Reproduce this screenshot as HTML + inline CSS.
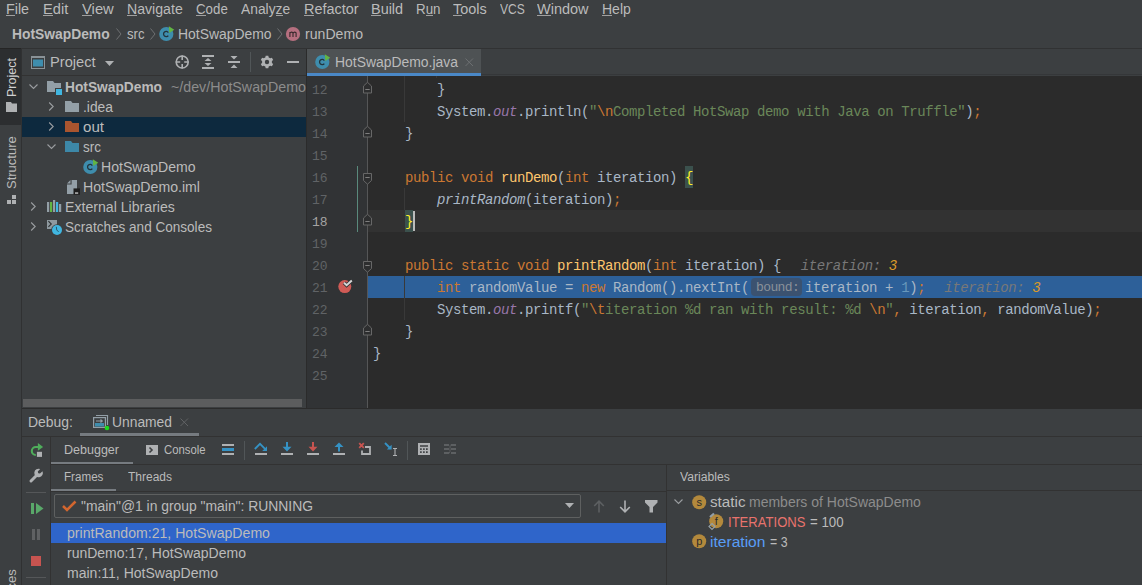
<!DOCTYPE html>
<html><head><meta charset="utf-8">
<style>
*{margin:0;padding:0;box-sizing:border-box}
html,body{width:1142px;height:585px;overflow:hidden;background:#3C3F41}
body{position:relative;font-family:"Liberation Sans",sans-serif;font-size:14px;color:#BBBBBB}
.a{position:absolute;white-space:pre}
svg.a{overflow:visible}
.ln{position:absolute;left:307px;width:61px;height:22px;line-height:22px;font-family:"Liberation Mono",monospace;font-size:13px;color:#606366;padding-left:5px}
.cl{position:absolute;left:373px;height:22px;line-height:22px;font-family:"Liberation Mono",monospace;font-size:14px;letter-spacing:-0.4px;color:#A9B7C6;white-space:pre}
.kw{color:#CC7832}
.str{color:#6A8759}
.num{color:#6897BB}
.fn{color:#FFC66D}
.sf{color:#9876AA;font-style:italic}
.it{font-style:italic}
.esc{color:#CC7832}
.hint{color:#787878;font-style:italic}
.hv{color:#DB9A2A;font-style:italic}
.bm{color:#FFEF28}
.bound{display:inline-block;width:56px}
</style></head><body>
<span class="a" style="left:6px;top:1.62px;font-size:14.63px;line-height:14.63px;color:#BBBBBB;transform:scaleX(0.980);transform-origin:0 0;">File</span>
<div class="a" style="left:6px;top:15px;width:9px;height:1px;background:#A0A0A0;"></div>
<span class="a" style="left:43px;top:1.62px;font-size:14.63px;line-height:14.63px;color:#BBBBBB;">Edit</span>
<div class="a" style="left:43px;top:15px;width:10px;height:1px;background:#A0A0A0;"></div>
<span class="a" style="left:82px;top:1.62px;font-size:14.63px;line-height:14.63px;color:#BBBBBB;transform:scaleX(1.011);transform-origin:0 0;">View</span>
<div class="a" style="left:82px;top:15px;width:10px;height:1px;background:#A0A0A0;"></div>
<span class="a" style="left:127px;top:1.62px;font-size:14.63px;line-height:14.63px;color:#BBBBBB;transform:scaleX(0.966);transform-origin:0 0;">Navigate</span>
<div class="a" style="left:127px;top:15px;width:10px;height:1px;background:#A0A0A0;"></div>
<span class="a" style="left:196px;top:1.62px;font-size:14.63px;line-height:14.63px;color:#BBBBBB;transform:scaleX(0.909);transform-origin:0 0;">Code</span>
<div class="a" style="left:196px;top:15px;width:10px;height:1px;background:#A0A0A0;"></div>
<span class="a" style="left:241px;top:1.62px;font-size:14.63px;line-height:14.63px;color:#BBBBBB;transform:scaleX(0.945);transform-origin:0 0;">Analyze</span>
<div class="a" style="left:276px;top:15px;width:7px;height:1px;background:#A0A0A0;"></div>
<span class="a" style="left:304px;top:1.62px;font-size:14.63px;line-height:14.63px;color:#BBBBBB;transform:scaleX(0.986);transform-origin:0 0;">Refactor</span>
<div class="a" style="left:304px;top:15px;width:10px;height:1px;background:#A0A0A0;"></div>
<span class="a" style="left:371px;top:1.62px;font-size:14.63px;line-height:14.63px;color:#BBBBBB;transform:scaleX(0.987);transform-origin:0 0;">Build</span>
<div class="a" style="left:371px;top:15px;width:10px;height:1px;background:#A0A0A0;"></div>
<span class="a" style="left:416px;top:1.62px;font-size:14.63px;line-height:14.63px;color:#BBBBBB;transform:scaleX(0.913);transform-origin:0 0;">Run</span>
<div class="a" style="left:426px;top:15px;width:7px;height:1px;background:#A0A0A0;"></div>
<span class="a" style="left:453px;top:1.62px;font-size:14.63px;line-height:14.63px;color:#BBBBBB;transform:scaleX(0.987);transform-origin:0 0;">Tools</span>
<div class="a" style="left:453px;top:15px;width:9px;height:1px;background:#A0A0A0;"></div>
<span class="a" style="left:500px;top:1.62px;font-size:14.63px;line-height:14.63px;color:#BBBBBB;transform:scaleX(0.824);transform-origin:0 0;">VCS</span>
<span class="a" style="left:537px;top:1.62px;font-size:14.63px;line-height:14.63px;color:#BBBBBB;transform:scaleX(0.990);transform-origin:0 0;">Window</span>
<div class="a" style="left:537px;top:15px;width:14px;height:1px;background:#A0A0A0;"></div>
<span class="a" style="left:602px;top:1.62px;font-size:14.63px;line-height:14.63px;color:#BBBBBB;transform:scaleX(0.957);transform-origin:0 0;">Help</span>
<div class="a" style="left:602px;top:15px;width:10px;height:1px;background:#A0A0A0;"></div>
<span class="a" style="left:12px;top:26.62px;font-size:14.63px;line-height:14.63px;color:#BBBBBB;font-weight:bold;transform:scaleX(0.946);transform-origin:0 0;">HotSwapDemo</span>
<svg class="a" style="left:116px;top:28px" width="6" height="12" viewBox="0 0 6 12"><path d="M0.5 0.5 L5 6.0 L0.5 11.5" fill="none" stroke="#6E7072" stroke-width="1"/></svg>
<span class="a" style="left:127px;top:26.62px;font-size:14.63px;line-height:14.63px;color:#BBBBBB;transform:scaleX(0.897);transform-origin:0 0;">src</span>
<svg class="a" style="left:150px;top:28px" width="6" height="12" viewBox="0 0 6 12"><path d="M0.5 0.5 L5 6.0 L0.5 11.5" fill="none" stroke="#6E7072" stroke-width="1"/></svg>
<svg class="a" style="left:159px;top:26px" width="16" height="16" viewBox="0 0 16 16"><circle cx="7.3" cy="8" r="7.1" fill="#3E8DAD"/><path d="M9.3 6.5 A2.6 2.6 0 1 0 9.3 9.5" fill="none" stroke="#23343C" stroke-width="1.3"/><path d="M9.8 0.3 L15.3 3.8 L10.3 7 Z" fill="#62B543"/></svg>
<span class="a" style="left:178px;top:26.62px;font-size:14.63px;line-height:14.63px;color:#BBBBBB;transform:scaleX(0.951);transform-origin:0 0;">HotSwapDemo</span>
<svg class="a" style="left:277px;top:28px" width="6" height="12" viewBox="0 0 6 12"><path d="M0.5 0.5 L5 6.0 L0.5 11.5" fill="none" stroke="#6E7072" stroke-width="1"/></svg>
<svg class="a" style="left:285px;top:26px" width="16" height="16" viewBox="0 0 16 16"><circle cx="8" cy="8" r="7.1" fill="#B56F7F"/><path d="M4.9 11 V6 M4.9 7.2 Q6.4 5.2 8 6.8 V11 M8 7.2 Q9.6 5.2 11.1 6.8 V11" fill="none" stroke="#3A2A2E" stroke-width="1.15"/></svg>
<span class="a" style="left:305px;top:26.62px;font-size:14.63px;line-height:14.63px;color:#BBBBBB;transform:scaleX(0.964);transform-origin:0 0;">runDemo</span>
<div class="a" style="left:0px;top:48px;width:1142px;height:1px;background:#313233;"></div>
<div class="a" style="left:0px;top:48px;width:21px;height:1px;background:#252525;"></div>
<div class="a" style="left:0px;top:49px;width:21px;height:536px;background:#3C3F41;"></div>
<div class="a" style="left:0px;top:49px;width:21px;height:76px;background:#2C2E30;"></div>
<div class="a" style="left:21px;top:49px;width:1px;height:536px;background:#303132;"></div>
<span class="a" style="left:5px;top:97px;font-size:13px;line-height:13px;color:#D0D0D0;transform:rotate(-90deg) scaleX(0.963);transform-origin:0 0">Project</span>
<svg class="a" style="left:6px;top:102px" width="12" height="10" viewBox="0 0 12 10"><path d="M0 0 H5 L6 1.5 H11 V10 H0 Z" fill="#AFB1B3"/></svg>
<span class="a" style="left:5px;top:189px;font-size:13px;line-height:13px;color:#BBBBBB;transform:rotate(-90deg);transform-origin:0 0">Structure</span>
<svg class="a" style="left:7px;top:195px" width="10" height="10" viewBox="0 0 10 10"><rect x="5" y="0" width="4" height="4" fill="#AFB1B3"/><rect x="0" y="5" width="4" height="4" fill="#AFB1B3"/><rect x="5" y="5" width="4" height="4" fill="#AFB1B3"/></svg>
<span class="a" style="left:5px;top:619px;font-size:13px;line-height:13px;color:#BBBBBB;transform:rotate(-90deg);transform-origin:0 0">Services</span>
<div class="a" style="left:22px;top:75px;width:284px;height:1px;background:#323232;"></div>
<svg class="a" style="left:31px;top:56px" width="14" height="13" viewBox="0 0 14 13"><rect x="0.5" y="0.5" width="13" height="12" fill="none" stroke="#8A9297" stroke-width="1"/><rect x="0" y="0" width="14" height="2" fill="#8A9297"/><rect x="2" y="3.5" width="10" height="7" fill="#3E8DAD"/></svg>
<span class="a" style="left:50px;top:54.62px;font-size:14.63px;line-height:14.63px;color:#BBBBBB;">Project</span>
<svg class="a" style="left:105px;top:61px" width="10" height="6" viewBox="0 0 10 6"><path d="M0 0 H9 L4.5 5 Z" fill="#AFB1B3"/></svg>
<svg class="a" style="left:175px;top:55px" width="15" height="15" viewBox="0 0 15 15"><circle cx="7.2" cy="7" r="6" fill="none" stroke="#AFB1B3" stroke-width="1.6"/><path d="M7.2 0.5 V5 M7.2 9 V13.5 M0.8 7 H5.2 M9.2 7 H13.6" stroke="#AFB1B3" stroke-width="1.6"/></svg>
<svg class="a" style="left:202px;top:55px" width="13" height="15" viewBox="0 0 13 15"><rect x="0" y="0" width="12" height="2" fill="#AFB1B3"/><rect x="0" y="12" width="12" height="2" fill="#AFB1B3"/><path d="M2.5 6 L6 3 L9.5 6 Z M2.5 8 L6 11 L9.5 8 Z" fill="#AFB1B3"/></svg>
<svg class="a" style="left:228px;top:55px" width="13" height="15" viewBox="0 0 13 15"><rect x="0" y="6" width="12" height="2" fill="#AFB1B3"/><path d="M2.5 1 L6 4.5 L9.5 1 Z M2.5 13 L6 9.5 L9.5 13 Z" fill="#AFB1B3"/></svg>
<div class="a" style="left:250px;top:52px;width:1px;height:20px;background:#515658;"></div>
<svg class="a" style="left:260px;top:55px" width="14" height="14" viewBox="0 0 14 14"><g transform="translate(7,7)"><path d="M-1.3 -6.3 H1.3 L1.7 -4.6 L3.3 -3.7 L4.9 -4.3 L6.2 -2 L4.9 -0.9 V0.9 L6.2 2 L4.9 4.3 L3.3 3.7 L1.7 4.6 L1.3 6.3 H-1.3 L-1.7 4.6 L-3.3 3.7 L-4.9 4.3 L-6.2 2 L-4.9 0.9 V-0.9 L-6.2 -2 L-4.9 -4.3 L-3.3 -3.7 L-1.7 -4.6 Z" fill="#AFB1B3"/><circle r="2.2" fill="#3C3F41"/></g></svg>
<div class="a" style="left:287px;top:61px;width:12px;height:2px;background:#AFB1B3;"></div>
<div class="a" style="left:22px;top:117px;width:284px;height:20px;background:#0D293E;"></div>
<svg class="a" style="left:29px;top:84px" width="10" height="6" viewBox="0 0 10 6"><path d="M0.5 0.5 L4.5 4.5 L8.5 0.5" fill="none" stroke="#9A9DA0" stroke-width="1.1"/></svg>
<svg class="a" style="left:47px;top:81px" width="16" height="15" viewBox="0 0 16 15"><path d="M0 0 H6 L7.5 2 H14 V11 H0 Z" fill="#939FA7"/><rect x="8" y="7" width="8" height="8" fill="#3C3F41"/><rect x="9" y="8" width="6" height="6" fill="#40B6E0"/></svg>
<span class="a" style="left:65px;top:79.62px;font-size:14.63px;line-height:14.63px;color:#BBBBBB;font-weight:bold;transform:scaleX(0.940);transform-origin:0 0;">HotSwapDemo</span>
<span class="a" style="left:171px;top:79.62px;font-size:14.63px;line-height:14.63px;color:#8C8C8C;transform:scaleX(0.974);transform-origin:0 0;">~/dev/HotSwapDemo</span>
<svg class="a" style="left:48px;top:102px" width="7" height="10" viewBox="0 0 7 10"><path d="M1.2 0.5 L5.2 4.5 L1.2 8.5" fill="none" stroke="#9A9DA0" stroke-width="1.1"/></svg>
<svg class="a" style="left:65px;top:101px" width="15" height="12" viewBox="0 0 15 12"><path d="M0 0 H6 L7.5 2 H14 V11 H0 Z" fill="#939FA7"/></svg>
<span class="a" style="left:83px;top:99.62px;font-size:14.63px;line-height:14.63px;color:#BBBBBB;transform:scaleX(0.946);transform-origin:0 0;">.idea</span>
<svg class="a" style="left:48px;top:122px" width="7" height="10" viewBox="0 0 7 10"><path d="M1.2 0.5 L5.2 4.5 L1.2 8.5" fill="none" stroke="#9A9DA0" stroke-width="1.1"/></svg>
<svg class="a" style="left:65px;top:121px" width="15" height="12" viewBox="0 0 15 12"><path d="M0 0 H6 L7.5 2 H14 V11 H0 Z" fill="#A9552F"/></svg>
<span class="a" style="left:83px;top:119.62px;font-size:14.63px;line-height:14.63px;color:#BBBBBB;transform:scaleX(1.033);transform-origin:0 0;">out</span>
<svg class="a" style="left:47px;top:144px" width="10" height="6" viewBox="0 0 10 6"><path d="M0.5 0.5 L4.5 4.5 L8.5 0.5" fill="none" stroke="#9A9DA0" stroke-width="1.1"/></svg>
<svg class="a" style="left:65px;top:141px" width="15" height="12" viewBox="0 0 15 12"><path d="M0 0 H6 L7.5 2 H14 V11 H0 Z" fill="#3D88A8"/></svg>
<span class="a" style="left:83px;top:139.62px;font-size:14.63px;line-height:14.63px;color:#BBBBBB;transform:scaleX(0.923);transform-origin:0 0;">src</span>
<svg class="a" style="left:83px;top:159px" width="16" height="16" viewBox="0 0 16 16"><circle cx="7.3" cy="8" r="7.1" fill="#3E8DAD"/><path d="M9.3 6.5 A2.6 2.6 0 1 0 9.3 9.5" fill="none" stroke="#23343C" stroke-width="1.3"/><path d="M9.8 0.3 L15.3 3.8 L10.3 7 Z" fill="#62B543"/></svg>
<span class="a" style="left:101px;top:159.62px;font-size:14.63px;line-height:14.63px;color:#BBBBBB;transform:scaleX(0.962);transform-origin:0 0;">HotSwapDemo</span>
<svg class="a" style="left:67px;top:180px" width="14" height="15" viewBox="0 0 14 15"><path d="M4.6 0 H10 V14 H0 V4.6 H4.6 Z" fill="#939FA7"/><path d="M0 3.5 L3.5 0 V3.5 Z" fill="#939FA7"/><rect x="6.5" y="8.4" width="6.5" height="6.3" fill="#1E1E1E"/><rect x="8" y="12.5" width="3.2" height="1.1" fill="#EEEEEE"/></svg>
<span class="a" style="left:83px;top:179.62px;font-size:14.63px;line-height:14.63px;color:#BBBBBB;transform:scaleX(0.966);transform-origin:0 0;">HotSwapDemo.iml</span>
<svg class="a" style="left:30px;top:202px" width="7" height="10" viewBox="0 0 7 10"><path d="M1.2 0.5 L5.2 4.5 L1.2 8.5" fill="none" stroke="#9A9DA0" stroke-width="1.1"/></svg>
<svg class="a" style="left:47px;top:200px" width="15" height="13" viewBox="0 0 15 13"><rect x="0" y="2" width="2.2" height="10" fill="#939FA7"/><rect x="3" y="2" width="2.2" height="10" fill="#62B543"/><rect x="6" y="0" width="2.2" height="12" fill="#939FA7"/><rect x="9" y="2" width="2.2" height="10" fill="#40B6E0"/><rect x="12" y="4" width="2.2" height="8" fill="#939FA7"/></svg>
<span class="a" style="left:65px;top:199.62px;font-size:14.63px;line-height:14.63px;color:#BBBBBB;transform:scaleX(0.966);transform-origin:0 0;">External Libraries</span>
<svg class="a" style="left:30px;top:222px" width="7" height="10" viewBox="0 0 7 10"><path d="M1.2 0.5 L5.2 4.5 L1.2 8.5" fill="none" stroke="#9A9DA0" stroke-width="1.1"/></svg>
<svg class="a" style="left:46px;top:219px" width="17" height="17" viewBox="0 0 17 17"><rect x="1" y="1" width="10" height="9" fill="#8E999F"/><path d="M2.4 2.2 L5.3 5 L2.4 7.9" fill="none" stroke="#2E3133" stroke-width="1.1"/><circle cx="11" cy="11" r="5.8" fill="#3C3F41"/><circle cx="11" cy="11" r="5" fill="#40B6E0"/><path d="M10.3 7.8 Q10 11.5 12.6 12.9" fill="none" stroke="#2A5568" stroke-width="1"/></svg>
<span class="a" style="left:65px;top:219.62px;font-size:14.63px;line-height:14.63px;color:#BBBBBB;transform:scaleX(0.927);transform-origin:0 0;">Scratches and Consoles</span>
<div class="a" style="left:23px;top:399px;width:279px;height:8px;background:#5C5D5E;"></div>
<div class="a" style="left:306px;top:49px;width:1px;height:359px;background:#2B2B2B;"></div>
<div class="a" style="left:307px;top:49px;width:835px;height:27px;background:#3C3F41;"></div>
<div class="a" style="left:307px;top:74px;width:835px;height:1px;background:#353739;"></div>
<div class="a" style="left:307px;top:49px;width:174px;height:27px;background:#4E5254;"></div>
<div class="a" style="left:307px;top:73px;width:174px;height:3px;background:#4A88C7;"></div>
<svg class="a" style="left:315px;top:54px" width="16" height="16" viewBox="0 0 16 16"><circle cx="7.3" cy="8" r="7.1" fill="#3E8DAD"/><path d="M9.3 6.5 A2.6 2.6 0 1 0 9.3 9.5" fill="none" stroke="#23343C" stroke-width="1.3"/><path d="M9.8 0.3 L15.3 3.8 L10.3 7 Z" fill="#62B543"/></svg>
<span class="a" style="left:335px;top:54.62px;font-size:14.63px;line-height:14.63px;color:#BBBBBB;transform:scaleX(0.951);transform-origin:0 0;">HotSwapDemo.java</span>
<svg class="a" style="left:465px;top:58px" width="9" height="9" viewBox="0 0 9 9"><path d="M0.5 0.5 L8 8 M8 0.5 L0.5 8" stroke="#6C6F71" stroke-width="1"/></svg>
<div class="a" style="left:307px;top:76px;width:835px;height:332px;background:#2B2B2B;"></div>
<div class="a" style="left:307px;top:76px;width:61px;height:332px;background:#313335;"></div>
<!--CODE-->
<div class="a" style="left:368px;top:210px;width:774px;height:22px;background:#323232;"></div>
<div class="a" style="left:368px;top:276px;width:774px;height:22px;background:#2D6099;"></div>
<div class="a" style="left:685px;top:166px;width:8px;height:22px;background:#3B514D;"></div>
<div class="a" style="left:405px;top:210px;width:8px;height:22px;background:#3B514D;"></div>
<div class="a" style="left:413px;top:211px;width:2px;height:20px;background:#BBBBBB;"></div>
<div class="a" style="left:751px;top:278px;width:51px;height:18px;background:#3B5270;border-radius:4px;"></div>
<div class="a" style="left:357px;top:166px;width:1px;height:66px;background:#5A8A7C;"></div>
<div class="a" style="left:367px;top:76px;width:1px;height:332px;background:#555657;"></div>
<div class="a" style="left:404px;top:76px;width:1px;height:46px;background:#393939;"></div>
<div class="a" style="left:436px;top:76px;width:1px;height:2px;background:#393939;"></div>
<div class="a" style="left:404px;top:188px;width:1px;height:22px;background:#393939;"></div>
<div class="a" style="left:404px;top:276px;width:1px;height:44px;background:#393939;"></div>
<svg class="a" style="left:363px;top:82px" width="9" height="12" viewBox="0 0 9 12"><path d="M0.5 11 H8.5 V4 L4.5 0.3 L0.5 4 Z" fill="#2D2E2F" stroke="#676767" stroke-width="1"/><path d="M2.3 7.5 H6.7" stroke="#7E7E7E" stroke-width="1"/></svg>
<svg class="a" style="left:363px;top:126px" width="9" height="12" viewBox="0 0 9 12"><path d="M0.5 11 H8.5 V4 L4.5 0.3 L0.5 4 Z" fill="#2D2E2F" stroke="#676767" stroke-width="1"/><path d="M2.3 7.5 H6.7" stroke="#7E7E7E" stroke-width="1"/></svg>
<svg class="a" style="left:363px;top:173px" width="9" height="12" viewBox="0 0 9 12"><path d="M0.5 0.5 H8.5 V7.5 L4.5 11.2 L0.5 7.5 Z" fill="#2D2E2F" stroke="#676767" stroke-width="1"/><path d="M2.3 4.5 H6.7" stroke="#7E7E7E" stroke-width="1"/></svg>
<svg class="a" style="left:363px;top:214px" width="9" height="12" viewBox="0 0 9 12"><path d="M0.5 11 H8.5 V4 L4.5 0.3 L0.5 4 Z" fill="#2D2E2F" stroke="#676767" stroke-width="1"/><path d="M2.3 7.5 H6.7" stroke="#7E7E7E" stroke-width="1"/></svg>
<svg class="a" style="left:363px;top:261px" width="9" height="12" viewBox="0 0 9 12"><path d="M0.5 0.5 H8.5 V7.5 L4.5 11.2 L0.5 7.5 Z" fill="#2D2E2F" stroke="#676767" stroke-width="1"/><path d="M2.3 4.5 H6.7" stroke="#7E7E7E" stroke-width="1"/></svg>
<svg class="a" style="left:363px;top:324px" width="9" height="12" viewBox="0 0 9 12"><path d="M0.5 11 H8.5 V4 L4.5 0.3 L0.5 4 Z" fill="#2D2E2F" stroke="#676767" stroke-width="1"/><path d="M2.3 7.5 H6.7" stroke="#7E7E7E" stroke-width="1"/></svg>
<svg class="a" style="left:336px;top:278px" width="18" height="17" viewBox="0 0 18 17"><circle cx="8.8" cy="8.6" r="6.5" fill="#D05B56"/><path d="M8 4.8 L10.6 7.2 L15.8 2.5" fill="none" stroke="#313335" stroke-width="3.6"/><path d="M8 4.8 L10.6 7.2 L15.8 2.5" fill="none" stroke="#D6D6D6" stroke-width="2"/></svg>
<div class="ln" style="top:80px">12</div>
<div class="ln" style="top:102px">13</div>
<div class="ln" style="top:124px">14</div>
<div class="ln" style="top:146px">15</div>
<div class="ln" style="top:168px">16</div>
<div class="ln" style="top:190px">17</div>
<div class="ln" style="top:212px;color:#A4A3A3">18</div>
<div class="ln" style="top:234px">19</div>
<div class="ln" style="top:256px">20</div>
<div class="ln" style="top:278px">21</div>
<div class="ln" style="top:300px">22</div>
<div class="ln" style="top:322px">23</div>
<div class="ln" style="top:344px">24</div>
<div class="ln" style="top:366px">25</div>
<div class="cl" style="top:79px">        }</div>
<div class="cl" style="top:101px">        System.<span class="sf">out</span>.println(<span class="str">"<span class="esc">\n</span>Completed HotSwap demo with Java on Truffle"</span>)<span class="kw">;</span></div>
<div class="cl" style="top:123px">    }</div>
<div class="cl" style="top:167px">    <span class="kw">public void </span><span class="fn">runDemo</span>(<span class="kw">int </span>iteration) <span class="bm">{</span></div>
<div class="cl" style="top:189px">        <span class="it">printRandom</span>(iteration)<span class="kw">;</span></div>
<div class="cl" style="top:211px">    <span class="bm">}</span></div>
<div class="cl" style="top:255px">    <span class="kw">public static void </span><span class="fn">printRandom</span>(<span class="kw">int </span>iteration) {<span class="hint" style="margin-left:19.5px">iteration: </span><span class="hv">3</span></div>
<div class="cl" style="top:277px">        <span class="kw">int </span>randomValue = <span class="kw">new </span>Random().nextInt(<span class="bound"></span>iteration + <span class="num">1</span>)<span class="kw">;</span><span class="hint" style="margin-left:19px">iteration: </span><span class="hv">3</span></div>
<div class="cl" style="top:299px">        System.<span class="sf">out</span>.printf(<span class="str">"<span class="esc">\t</span>iteration %d ran with result: %d <span class="esc">\n</span>"</span><span class="kw">, </span>iteration<span class="kw">, </span>randomValue)<span class="kw">;</span></div>
<div class="cl" style="top:321px">    }</div>
<div class="cl" style="top:343px">}</div>
<span class="a" style="left:756px;top:281px;font-family:'Liberation Mono',monospace;font-size:13px;line-height:13px;letter-spacing:-0.6px;color:#8A9199">bound:</span>
<div class="a" style="left:22px;top:408px;width:1120px;height:1px;background:#2B2B2B;"></div>
<span class="a" style="left:28px;top:414.62px;font-size:14.63px;line-height:14.63px;color:#BBBBBB;transform:scaleX(0.954);transform-origin:0 0;">Debug:</span>
<svg class="a" style="left:93px;top:414px" width="17" height="17" viewBox="0 0 17 17"><path d="M3 1.5 H14.5 V11" fill="none" stroke="#939FA7" stroke-width="1.2"/><rect x="0.6" y="3.6" width="11.8" height="9.8" fill="none" stroke="#939FA7" stroke-width="1.2"/><rect x="2" y="9" width="9" height="3.5" fill="#3E8DAD"/><path d="M3 7 H9 M7.5 5.5 L9.3 7 L7.5 8.5" fill="none" stroke="#939FA7" stroke-width="1.1"/><circle cx="14" cy="14" r="2.3" fill="#1ED81E"/></svg>
<span class="a" style="left:112px;top:414.62px;font-size:14.63px;line-height:14.63px;color:#BBBBBB;transform:scaleX(0.946);transform-origin:0 0;">Unnamed</span>
<svg class="a" style="left:180px;top:418px" width="9" height="9" viewBox="0 0 9 9"><path d="M0.5 0.5 L8 8 M8 0.5 L0.5 8" stroke="#606264" stroke-width="1"/></svg>
<div class="a" style="left:80px;top:433px;width:119px;height:3px;background:#767B80;"></div>
<div class="a" style="left:22px;top:436px;width:1120px;height:1px;background:#323232;"></div>
<div class="a" style="left:50px;top:437px;width:1px;height:148px;background:#323232;"></div>
<svg class="a" style="left:26px;top:440px" width="20" height="20" viewBox="0 0 20 20"><path d="M9.8 15 A4 4 0 0 1 9.8 7 H12.5" fill="none" stroke="#4FAD5B" stroke-width="2.1"/><path d="M11.9 2.9 L17.1 6.9 L11.9 10.8 Z" fill="#4FAD5B"/><rect x="10.9" y="11.8" width="5.1" height="5.1" fill="#AFB1B3"/></svg>
<svg class="a" style="left:29px;top:468px" width="15" height="15" viewBox="0 0 15 15"><path d="M2 13 L8.2 6.8" stroke="#AFB1B3" stroke-width="3" stroke-linecap="round"/><path d="M13.5 3.2 L11 5.6 L9.2 5.2 L8.8 3.4 L11.2 1 A4.3 4.3 0 1 0 13.5 3.2 Z" fill="#AFB1B3"/></svg>
<div class="a" style="left:26px;top:492px;width:20px;height:1px;background:#555759;"></div>
<svg class="a" style="left:30px;top:502px" width="14" height="13" viewBox="0 0 14 13"><rect x="1" y="1" width="3" height="11" fill="#59A869"/><path d="M6 1 L13.5 6.5 L6 12 Z" fill="#59A869"/></svg>
<div class="a" style="left:32px;top:529px;width:3px;height:11px;background:#5F6163;"></div>
<div class="a" style="left:37px;top:529px;width:3px;height:11px;background:#5F6163;"></div>
<div class="a" style="left:31px;top:556px;width:10px;height:10px;background:#C75450;"></div>
<div class="a" style="left:26px;top:577px;width:20px;height:1px;background:#555759;"></div>
<span class="a" style="left:64px;top:442.50px;font-size:13.58px;line-height:13.58px;color:#BBBBBB;transform:scaleX(0.922);transform-origin:0 0;">Debugger</span>
<svg class="a" style="left:146px;top:445px" width="13" height="10" viewBox="0 0 13 10"><rect x="0" y="0" width="12" height="10" fill="#AFB1B3"/><path d="M3.5 2.5 L6 5 L3.5 7.5" fill="none" stroke="#3C3F41" stroke-width="1.6"/></svg>
<span class="a" style="left:164px;top:442.50px;font-size:13.58px;line-height:13.58px;color:#BBBBBB;transform:scaleX(0.833);transform-origin:0 0;">Console</span>
<div class="a" style="left:222px;top:444px;width:12px;height:2px;background:#AFB1B3;"></div>
<div class="a" style="left:222px;top:448px;width:12px;height:3px;background:#3592C4;"></div>
<div class="a" style="left:222px;top:453px;width:12px;height:2px;background:#AFB1B3;"></div>
<div class="a" style="left:244px;top:441px;width:1px;height:19px;background:#515658;"></div>
<svg class="a" style="left:254px;top:442px" width="14" height="14" viewBox="0 0 14 14"><path d="M0.8 7 L6 1.8 L11 6.8" fill="none" stroke="#3592C4" stroke-width="1.8"/><path d="M13 4.2 V9 H8.2 Z" fill="#3592C4"/><rect x="1" y="11" width="12" height="2" fill="#AFB1B3"/></svg>
<svg class="a" style="left:280px;top:442px" width="14" height="14" viewBox="0 0 14 14"><rect x="6" y="0" width="2" height="6" fill="#3592C4"/><path d="M2.5 4.8 H11.5 L7 9.5 Z" fill="#3592C4"/><rect x="1" y="11" width="12" height="2" fill="#AFB1B3"/></svg>
<svg class="a" style="left:306px;top:442px" width="14" height="14" viewBox="0 0 14 14"><rect x="6" y="0" width="2" height="6" fill="#C75450"/><path d="M2.5 4.8 H11.5 L7 9.5 Z" fill="#C75450"/><rect x="1" y="11" width="12" height="2" fill="#AFB1B3"/></svg>
<svg class="a" style="left:332px;top:442px" width="14" height="14" viewBox="0 0 14 14"><rect x="6" y="4" width="2" height="5.5" fill="#3592C4"/><path d="M2.5 5 H11.5 L7 0.5 Z" fill="#3592C4"/><rect x="1" y="11" width="12" height="2" fill="#AFB1B3"/></svg>
<svg class="a" style="left:358px;top:442px" width="14" height="14" viewBox="0 0 14 14"><path d="M1.2 1.2 L5.8 5.8 M5.8 1.2 L1.2 5.8" stroke="#C75450" stroke-width="1.8"/><path d="M7 5 H12 V12 H4 V8.5" fill="none" stroke="#AFB1B3" stroke-width="1.8"/></svg>
<svg class="a" style="left:384px;top:442px" width="15" height="15" viewBox="0 0 15 15"><path d="M1 1 L6.5 6.5" stroke="#3592C4" stroke-width="2"/><path d="M7.6 2.8 V7.6 H2.8 Z" fill="#3592C4"/><path d="M9 6.5 H13 M11 6.5 V13.5 M9 13.5 H13" fill="none" stroke="#AFB1B3" stroke-width="1.1"/></svg>
<div class="a" style="left:407px;top:441px;width:1px;height:19px;background:#515658;"></div>
<svg class="a" style="left:418px;top:443px" width="12" height="12" viewBox="0 0 12 12"><path fill-rule="evenodd" fill="#AFB1B3" d="M0 0 H12 V12 H0 Z M2 2.2 H10 V3.7 H2 Z M2.1 5.3 H3.7 V6.9 H2.1 Z M5.1 5.3 H6.7 V6.9 H5.1 Z M8 5.3 H9.7 V6.9 H8 Z M2.1 8.3 H3.7 V9.9 H2.1 Z M5.1 8.3 H6.7 V9.9 H5.1 Z M8 8.3 H9.7 V9.9 H8 Z"/></svg>
<svg class="a" style="left:444px;top:443px" width="13" height="12" viewBox="0 0 13 12"><path d="M0 2 H5 M0 6 H5 M0 10 H5 M7 2 H12 M7 6 H12 M7 10 H12" fill="none" stroke="#5D6062" stroke-width="1.9"/><path d="M7.5 1.2 Q5.5 2 6 5.5 Q6.5 9 5 10.5" fill="none" stroke="#5D6062" stroke-width="0.9"/></svg>
<div class="a" style="left:51px;top:462px;width:82px;height:2px;background:#767B80;"></div>
<div class="a" style="left:51px;top:464px;width:1091px;height:1px;background:#323232;"></div>
<span class="a" style="left:64px;top:469.94px;font-size:13.06px;line-height:13.06px;color:#BBBBBB;transform:scaleX(0.892);transform-origin:0 0;">Frames</span>
<span class="a" style="left:128px;top:469.94px;font-size:13.06px;line-height:13.06px;color:#BBBBBB;transform:scaleX(0.918);transform-origin:0 0;">Threads</span>
<div class="a" style="left:51px;top:489px;width:65px;height:2px;background:#767B80;"></div>
<div class="a" style="left:51px;top:491px;width:615px;height:1px;background:#323232;"></div>
<div class="a" style="left:666px;top:465px;width:1px;height:120px;background:#323232;"></div>
<span class="a" style="left:680px;top:469.94px;font-size:13.06px;line-height:13.06px;color:#BBBBBB;transform:scaleX(0.935);transform-origin:0 0;">Variables</span>
<div class="a" style="left:667px;top:490px;width:475px;height:1px;background:#323232;"></div>
<div class="a" style="left:54px;top:494px;width:527px;height:24px;background:transparent;border:1px solid #5E6060;border-radius:2px;"></div>
<svg class="a" style="left:62px;top:500px" width="15" height="12" viewBox="0 0 15 12"><path d="M1 6 L5 10 L13.5 1.5" fill="none" stroke="#D2662F" stroke-width="2.5"/></svg>
<span class="a" style="left:81px;top:498.62px;font-size:14.63px;line-height:14.63px;color:#BBBBBB;transform:scaleX(0.949);transform-origin:0 0;">"main"@1 in group "main": RUNNING</span>
<svg class="a" style="left:565px;top:503px" width="9" height="6" viewBox="0 0 9 6"><path d="M0 0 H9 L4.5 5 Z" fill="#AFB1B3"/></svg>
<svg class="a" style="left:593px;top:500px" width="12" height="13" viewBox="0 0 12 13"><path d="M6 12.5 V1.5 M1.2 6 L6 1.2 L10.8 6" fill="none" stroke="#5D6062" stroke-width="1.6"/></svg>
<svg class="a" style="left:619px;top:500px" width="12" height="13" viewBox="0 0 12 13"><path d="M6 0.5 V11.5 M1.2 7 L6 11.8 L10.8 7" fill="none" stroke="#AFB1B3" stroke-width="1.6"/></svg>
<svg class="a" style="left:645px;top:500px" width="13" height="13" viewBox="0 0 13 13"><path d="M0 0 H12.5 V2.5 L8 7 V12.5 H4.5 V7 L0 2.5 Z" fill="#AFB1B3"/></svg>
<div class="a" style="left:51px;top:523px;width:615px;height:20px;background:#2F65CA;"></div>
<span class="a" style="left:67px;top:525.62px;font-size:14.63px;line-height:14.63px;color:#BBBBBB;transform:scaleX(0.964);transform-origin:0 0;">printRandom:21, HotSwapDemo</span>
<span class="a" style="left:67px;top:545.62px;font-size:14.63px;line-height:14.63px;color:#BBBBBB;transform:scaleX(0.957);transform-origin:0 0;">runDemo:17, HotSwapDemo</span>
<span class="a" style="left:67px;top:565.62px;font-size:14.63px;line-height:14.63px;color:#BBBBBB;transform:scaleX(0.959);transform-origin:0 0;">main:11, HotSwapDemo</span>
<svg class="a" style="left:674px;top:499px" width="10" height="6" viewBox="0 0 10 6"><path d="M0.5 0.5 L4.5 4.5 L8.5 0.5" fill="none" stroke="#9A9DA0" stroke-width="1.1"/></svg>
<svg class="a" style="left:692px;top:495px" width="15" height="15" viewBox="0 0 15 15"><circle cx="7.2" cy="7.2" r="7" fill="#B3893C"/><text x="7.2" y="11" text-anchor="middle" font-family="Liberation Sans" font-size="11" fill="#2B2B2B">s</text></svg>
<span class="a" style="left:710px;top:494.62px;font-size:14.63px;line-height:14.63px;color:#BBBBBB;transform:scaleX(1.040);transform-origin:0 0;">static</span>
<span class="a" style="left:749px;top:494.62px;font-size:14.63px;line-height:14.63px;color:#8C8C8C;transform:scaleX(0.957);transform-origin:0 0;">members of HotSwapDemo</span>
<svg class="a" style="left:709px;top:514px" width="15" height="15" viewBox="0 0 15 15"><circle cx="7.2" cy="7.2" r="7" fill="#B3893C"/><text x="7.2" y="11" text-anchor="middle" font-family="Liberation Sans" font-size="11" fill="#2B2B2B">f</text></svg>
<svg class="a" style="left:708px;top:513px" width="8" height="18" viewBox="0 0 8 18"><path d="M2 4 L6 0.5" stroke="#939FA7" stroke-width="2.2"/><path d="M4 10.5 L7 13.5 L4 16.5 L1 13.5 Z" fill="none" stroke="#939FA7" stroke-width="1.2"/></svg>
<span class="a" style="left:728px;top:514.62px;font-size:14.63px;line-height:14.63px;color:#E8736D;transform:scaleX(0.894);transform-origin:0 0;">ITERATIONS</span>
<span class="a" style="left:810px;top:514.62px;font-size:14.63px;line-height:14.63px;color:#BBBBBB;transform:scaleX(0.908);transform-origin:0 0;">= 100</span>
<svg class="a" style="left:692px;top:534px" width="15" height="15" viewBox="0 0 15 15"><circle cx="7.2" cy="7.2" r="7" fill="#B3893C"/><text x="7.2" y="11" text-anchor="middle" font-family="Liberation Sans" font-size="11" fill="#2B2B2B">p</text></svg>
<span class="a" style="left:710px;top:534.62px;font-size:14.63px;line-height:14.63px;color:#589DF6;transform:scaleX(1.066);transform-origin:0 0;">iteration</span>
<span class="a" style="left:769.5px;top:534.62px;font-size:14.63px;line-height:14.63px;color:#BBBBBB;transform:scaleX(0.844);transform-origin:0 0;">= 3</span>
</body></html>
